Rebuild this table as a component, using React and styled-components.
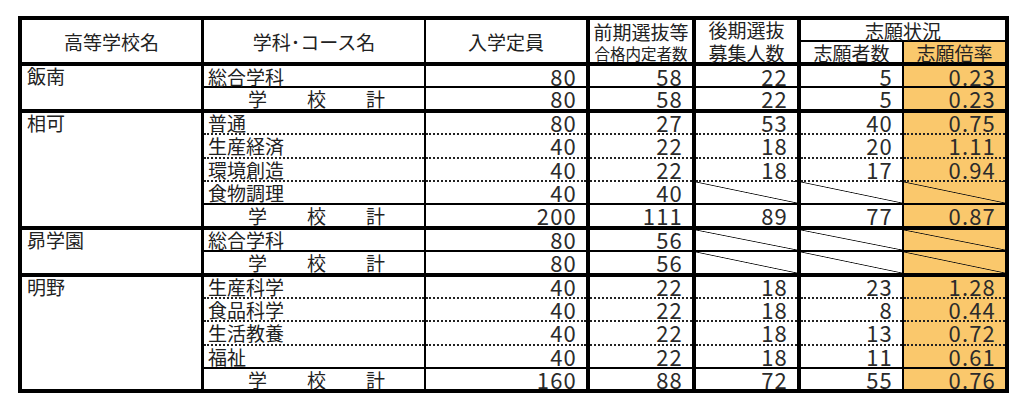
import React from "react";
import styled, { createGlobalStyle, css } from "styled-components";

const GlobalStyle = createGlobalStyle`
  html, body {
    margin: 0;
    padding: 0;
    background: #fff;
  }
  body {
    font-family: "Noto Sans CJK JP", "Noto Sans", sans-serif;
    color: #222;
  }
`;

const ORANGE = "#fac86c";
// right border width of each column
const RIGHT = [3, 2, 4, 4, 4, 2, 4];
const WIDTHS = [182.5, 222.5, 163, 106, 105, 104, 104];

const Page = styled.div`
  padding: 16px 0 20px 18px;
`;

const Table = styled.table`
  border-collapse: collapse;
  table-layout: fixed;
  width: 991px;
  font-size: 19px;
  line-height: 19px;
`;

const cellBorders = css`
  border-right: ${(p) => RIGHT[p.$col]}px solid #000;
  border-left: ${(p) => (p.$col === 0 ? "4px solid #000" : "none")};
`;

const HeadRow = styled.tr`
  height: ${(p) => p.$h}px;
`;

const HeadCell = styled.th`
  ${cellBorders};
  border-top: ${(p) => (p.$sub ? "2px solid #000" : "4px solid #000")};
  border-bottom: ${(p) => (p.$span ? "2px solid #000" : "4px solid #000")};
  background: ${(p) => (p.$orange ? ORANGE : "#fff")};
  font-weight: 400;
  text-align: center;
  vertical-align: middle;
  padding: 0;
  white-space: nowrap;
`;

const HeadLine = styled.div`
  font-size: ${(p) => (p.$small ? 15.5 : 19)}px;
  line-height: ${(p) => (p.$small ? 16 : 19)}px;
  margin-top: ${(p) => (p.$second ? 4 : 0)}px;
`;

const BodyRow = styled.tr`
  height: 23.4px;
`;

const TOP = {
  thick: "4px solid #000",
  solid: "2px solid #000",
  dotted: "2px dotted #222",
};

const SchoolCell = styled.td`
  ${cellBorders};
  border-top: 4px solid #000;
  border-bottom: 4px solid #000;
  vertical-align: top;
  padding: 0 0 0 5px;
`;

const CourseCell = styled.td`
  ${cellBorders};
  border-top: ${(p) => TOP[p.$top]};
  border-bottom: ${(p) => (p.$last ? "4px solid #000" : "none")};
  padding: 0 0 0 4px;
  white-space: nowrap;
  vertical-align: middle;
`;

const TotalLabel = styled.span`
  padding-left: 40px;
  letter-spacing: 40px;
`;

const NumCell = styled.td`
  ${cellBorders};
  border-top: ${(p) => TOP[p.$top]};
  border-bottom: ${(p) => (p.$last ? "4px solid #000" : "none")};
  text-align: right;
  padding: 0 9px 0 0;
  font-size: 22px;
  line-height: 19px;
  letter-spacing: 1.2px;
  color: #2b2b2b;
  vertical-align: middle;
  background-color: ${(p) => (p.$rate ? ORANGE : "#fff")};
  background-image: ${(p) =>
    p.$slash
      ? "linear-gradient(to top right, transparent calc(50% - 0.8px), #111 50%, transparent calc(50% + 0.8px))"
      : "none"};
`;

const schools = [
  {
    name: "飯南",
    rows: [
      ["総合学科", 80, 58, 22, 5, "0.23"],
      [null, 80, 58, 22, 5, "0.23"],
    ],
  },
  {
    name: "相可",
    rows: [
      ["普通", 80, 27, 53, 40, "0.75"],
      ["生産経済", 40, 22, 18, 20, "1.11"],
      ["環境創造", 40, 22, 18, 17, "0.94"],
      ["食物調理", 40, 40, "-", "-", "-"],
      [null, 200, 111, 89, 77, "0.87"],
    ],
  },
  {
    name: "昴学園",
    rows: [
      ["総合学科", 80, 56, "-", "-", "-"],
      [null, 80, 56, "-", "-", "-"],
    ],
  },
  {
    name: "明野",
    rows: [
      ["生産科学", 40, 22, 18, 23, "1.28"],
      ["食品科学", 40, 22, 18, 8, "0.44"],
      ["生活教養", 40, 22, 18, 13, "0.72"],
      ["福祉", 40, 22, 18, 11, "0.61"],
      [null, 160, 88, 72, 55, "0.76"],
    ],
  },
];

const App = () => {
  return (
    <Page>
      <GlobalStyle />
      <Table>
        <colgroup>
          {WIDTHS.map((w, i) => (
            <col key={i} style={{ width: w }} />
          ))}
        </colgroup>
        <thead>
          <HeadRow $h={22}>
            <HeadCell $col={0} rowSpan={2}>高等学校名</HeadCell>
            <HeadCell $col={1} rowSpan={2}>学科･コース名</HeadCell>
            <HeadCell $col={2} rowSpan={2}>入学定員</HeadCell>
            <HeadCell $col={3} rowSpan={2}>
              <HeadLine>前期選抜等</HeadLine>
              <HeadLine $second $small>合格内定者数</HeadLine>
            </HeadCell>
            <HeadCell $col={4} rowSpan={2}>
              <HeadLine>後期選抜</HeadLine>
              <HeadLine $second>募集人数</HeadLine>
            </HeadCell>
            <HeadCell $col={6} colSpan={2} $span>志願状況</HeadCell>
          </HeadRow>
          <HeadRow $h={21}>
            <HeadCell $col={5} $sub>志願者数</HeadCell>
            <HeadCell $col={6} $sub $orange>志願倍率</HeadCell>
          </HeadRow>
        </thead>
        <tbody>
          {schools.map((school) =>
            school.rows.map((row, i) => {
              const top = i === 0 ? "thick" : row[0] === null ? "solid" : "dotted";
              const last = i === school.rows.length - 1;
              return (
                <BodyRow key={school.name + i}>
                  {i === 0 && (
                    <SchoolCell $col={0} rowSpan={school.rows.length}>
                      {school.name}
                    </SchoolCell>
                  )}
                  <CourseCell $col={1} $top={top} $last={last}>
                    {row[0] === null ? <TotalLabel>学校計</TotalLabel> : row[0]}
                  </CourseCell>
                  {row.slice(1).map((v, j) => (
                    <NumCell
                      key={j}
                      $col={j + 2}
                      $top={top}
                      $last={last}
                      $rate={j === 4}
                      $slash={v === "-"}
                    >
                      {v === "-" ? "" : v}
                    </NumCell>
                  ))}
                </BodyRow>
              );
            })
          )}
        </tbody>
      </Table>
    </Page>
  );
};

export default App;
